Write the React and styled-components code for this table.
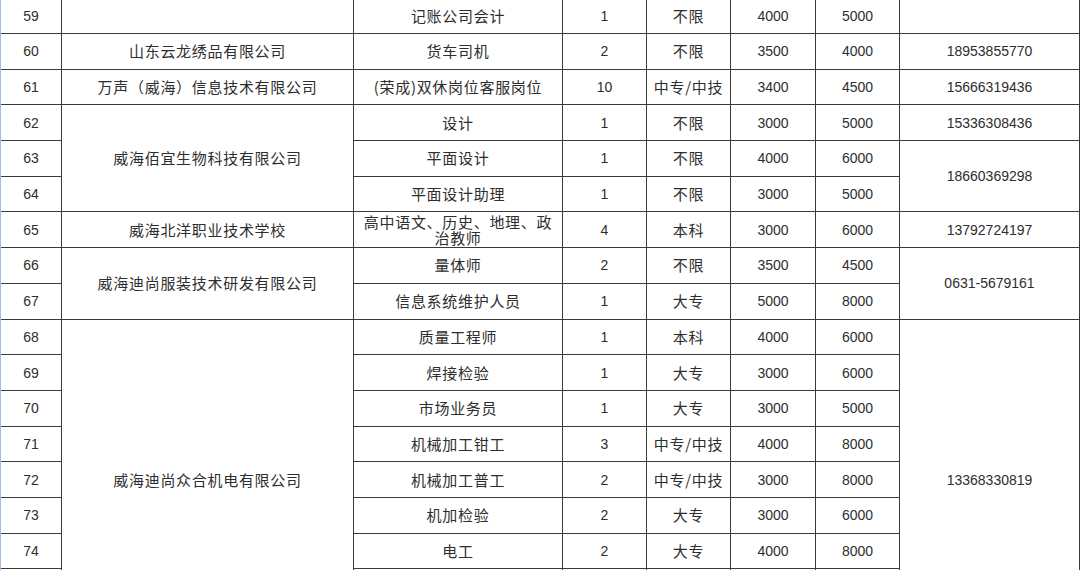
import React from 'react';
import styled, { createGlobalStyle } from 'styled-components';

const Global = createGlobalStyle`
  html, body {
    margin: 0;
    padding: 0;
    background: #ffffff;
    overflow: hidden;
  }
  body {
    width: 1080px;
    height: 570px;
  }
`;

const Sheet = styled.div`
  display: grid;
  grid-template-columns: 61px 292px 209px 84px 84px 85px 84px 180px;
  grid-auto-rows: 35.7px;
  width: 1079px;
  margin-top: -1.7px;
  border-left: 1px solid #a3bde0;
  font-family: "Noto Sans CJK SC", "Liberation Sans", sans-serif;
  color: #2e2e2e;
`;

const Cell = styled.div`
  grid-row: span ${(p) => p.$rows || 1};
  box-sizing: border-box;
  border-right: 1px solid #3a3a3a;
  border-bottom: 1px solid #3a3a3a;
  display: flex;
  align-items: center;
  justify-content: center;
  text-align: center;
  padding: 0 4px;
  white-space: ${(p) => (p.$wrap ? 'normal' : 'nowrap')};
  font-family: ${(p) => (p.$num ? '"Liberation Sans", sans-serif' : 'inherit')};
  font-size: ${(p) => (p.$num ? '14px' : '15px')};
  letter-spacing: ${(p) => (p.$num ? '0' : '0.7px')};
  line-height: 16px;
`;

const E = { t: '' };

const rows = [
  ['59', E, '记账公司会计', '1', '不限', '4000', '5000', E],
  ['60', '山东云龙绣品有限公司', '货车司机', '2', '不限', '3500', '4000', '18953855770'],
  ['61', '万声（威海）信息技术有限公司', '(荣成)双休岗位客服岗位', '10', '中专/中技', '3400', '4500', '15666319436'],
  ['62', { t: '威海佰宜生物科技有限公司', rows: 3 }, '设计', '1', '不限', '3000', '5000', '15336308436'],
  ['63', '平面设计', '1', '不限', '4000', '6000', { t: '18660369298', rows: 2 }],
  ['64', '平面设计助理', '1', '不限', '3000', '5000'],
  ['65', '威海北洋职业技术学校', { t: '高中语文、历史、地理、政治教师', wrap: true }, '4', '本科', '3000', '6000', '13792724197'],
  ['66', { t: '威海迪尚服装技术研发有限公司', rows: 2 }, '量体师', '2', '不限', '3500', '4500', { t: '0631-5679161', rows: 2 }],
  ['67', '信息系统维护人员', '1', '大专', '5000', '8000'],
  ['68', { t: '威海迪尚众合机电有限公司', rows: 9 }, '质量工程师', '1', '本科', '4000', '6000', { t: '13368330819', rows: 9 }],
  ['69', '焊接检验', '1', '大专', '3000', '6000'],
  ['70', '市场业务员', '1', '大专', '3000', '5000'],
  ['71', '机械加工钳工', '3', '中专/中技', '4000', '8000'],
  ['72', '机械加工普工', '2', '中专/中技', '3000', '8000'],
  ['73', '机加检验', '2', '大专', '3000', '6000'],
  ['74', '电工', '2', '大专', '4000', '8000'],
  [E, E, E, E, E, E],
  [E, E, E, E, E, E],
];

export default function App() {
  return (
    <>
      <Global />
      <Sheet>
        {rows.map((row, ri) =>
          row.map((c, ci) => {
            const cell = typeof c === 'string' ? { t: c } : c;
            const isNum = /^[\d-]+$/.test(cell.t);
            return (
              <Cell key={`${ri}-${ci}`} $rows={cell.rows} $num={isNum} $wrap={cell.wrap}>
                {cell.t}
              </Cell>
            );
          })
        )}
      </Sheet>
    </>
  );
}
